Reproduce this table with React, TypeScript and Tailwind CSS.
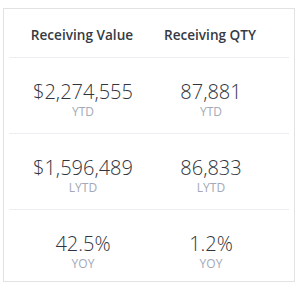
import React from "react";

const rows = [
  { value: "$2,274,555", qty: "87,881", label: "YTD" },
  { value: "$1,596,489", qty: "86,833", label: "LYTD" },
  { value: "42.5%", qty: "1.2%", label: "YOY" },
];

const Cell = ({ main, sub }: { main: string; sub: string }) => (
  <div className="flex flex-col items-center">
    <div className="text-[20px] leading-[22px] font-light text-[#30343c]">{main}</div>
    <div className="mt-[3px] text-[12px] leading-[12px] text-[#a3a9b6]">{sub}</div>
  </div>
);

export default function App() {
  return (
    <div className="w-[300px] h-[286px] bg-white pt-[8px] pl-[3px]" style={{ fontFamily: "'Open Sans', sans-serif" }}>
      <div className="w-[292px] h-[274px] border border-[#e2e2e2]">
        <div className="grid grid-cols-[128px_128px] pl-[14px] pt-[18px] pb-[14px]">
          <div className="text-center text-[13.6px] leading-[16px] font-semibold text-[#353a44]">Receiving Value</div>
          <div className="text-center text-[13.6px] leading-[16px] font-semibold text-[#353a44]">Receiving QTY</div>
        </div>
        {rows.map((r) => (
          <div key={r.label} className="mx-[5px] border-t border-[#eceef3]">
            <div className="grid grid-cols-[128px_128px] pl-[10px] pt-[23px] pb-[15px]">
              <Cell main={r.value} sub={r.label} />
              <Cell main={r.qty} sub={r.label} />
            </div>
          </div>
        ))}
      </div>
    </div>
  );
}
